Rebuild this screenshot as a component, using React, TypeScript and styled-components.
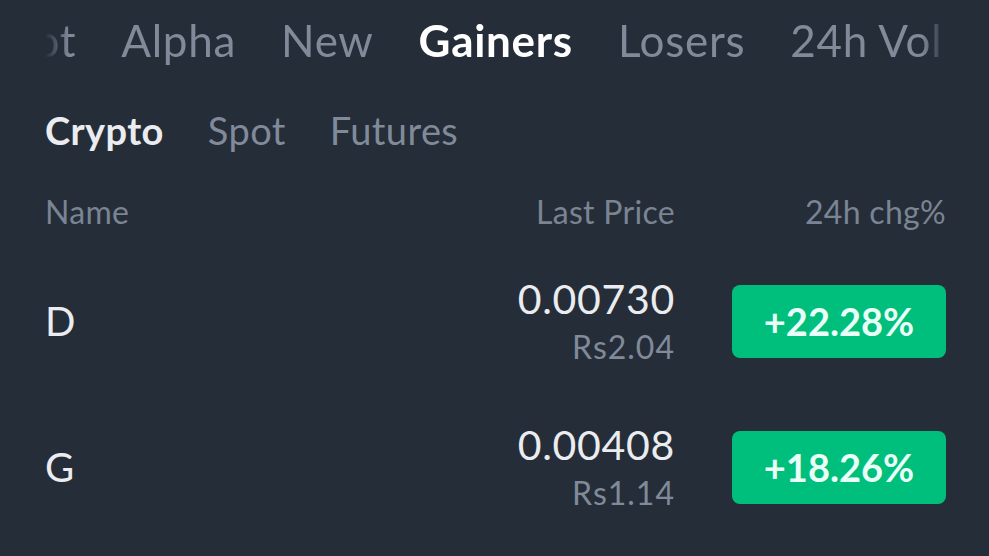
import React from 'react';
import styled, { createGlobalStyle } from 'styled-components';

const GlobalStyle = createGlobalStyle`
  html, body {
    margin: 0;
    padding: 0;
    background: #252d39;
  }
  body {
    font-family: Lato, 'Noto Sans', sans-serif;
    color: #eaecef;
  }
`;

const Screen = styled.main`
  box-sizing: border-box;
  width: 989px;
  height: 556px;
  overflow: hidden;
  background: #252d39;
`;

const TabViewport = styled.nav`
  position: relative;
  margin: 0 43px 0 45px;
  height: 80px;
  overflow: hidden;
  // soft fade where the strip is clipped
  mask-image: linear-gradient(
    to right,
    transparent 0,
    #000 24px,
    #000 calc(100% - 24px),
    transparent 100%
  );
`;

const TabStrip = styled.div<{ $offset: number }>`
  display: flex;
  align-items: center;
  gap: 45px;
  height: 100%;
  margin-left: ${(p) => -p.$offset}px;
  white-space: nowrap;
`;

const Tab = styled.span<{ $active?: boolean }>`
  font-size: 44px;
  letter-spacing: 0.7px;
  font-weight: ${(p) => (p.$active ? 700 : 400)};
  color: ${(p) => (p.$active ? '#ffffff' : '#808a99')};
`;

const SubTabs = styled.div`
  display: flex;
  gap: 44px;
  height: 100px;
  align-items: center;
  padding: 0 45px;
`;

const SubTab = styled.span<{ $active?: boolean }>`
  font-size: 38px;
  letter-spacing: 0.4px;
  font-weight: ${(p) => (p.$active ? 700 : 400)};
  color: ${(p) => (p.$active ? '#eaecef' : '#808a99')};
`;

const Grid = styled.div`
  display: grid;
  grid-template-columns: 1fr auto 214px;
  column-gap: 57px;
  align-items: center;
  padding: 0 43px 0 45px;
`;

const HeaderRow = styled(Grid)`
  height: 62px;
  padding-bottom: 6px;
  font-size: 32px;
  letter-spacing: 0.3px;
  color: #7a8493;
`;

const HeadCell = styled.span<{ $align?: string }>`
  text-align: ${(p) => p.$align || 'left'};
`;

const Row = styled(Grid)`
  height: 146px;
`;

const Symbol = styled.span`
  font-size: 40px;
  color: #eaecef;
`;

const PriceCell = styled.div`
  display: flex;
  flex-direction: column;
  align-items: flex-end;
`;

const Price = styled.span`
  font-size: 41px;
  letter-spacing: 0.7px;
  line-height: 46px;
  color: #eaecef;
`;

const Fiat = styled.span`
  margin-top: 5px;
  font-size: 32px;
  letter-spacing: 1px;
  line-height: 40px;
  color: #808a99;
`;

const ChangeBadge = styled.div`
  display: flex;
  align-items: center;
  justify-content: center;
  height: 73px;
  border-radius: 8px;
  background: #00bf7d;
  color: #e9fff7;
  font-size: 38px;
  font-weight: 700;
`;

const tabs = ['Hot', 'Alpha', 'New', 'Gainers', 'Losers', '24h Vol', 'Market Cap'];

const rows = [
  { symbol: 'D', price: '0.00730', fiat: 'Rs2.04', change: '+22.28%' },
  { symbol: 'G', price: '0.00408', fiat: 'Rs1.14', change: '+18.26%' },
];

const App = (): JSX.Element => {
  return (
    <Screen>
      <GlobalStyle />
      <TabViewport>
        <TabStrip $offset={44}>
          {tabs.map((t) => (
            <Tab key={t} $active={t === 'Gainers'}>
              {t}
            </Tab>
          ))}
        </TabStrip>
      </TabViewport>
      <SubTabs>
        <SubTab $active>Crypto</SubTab>
        <SubTab>Spot</SubTab>
        <SubTab>Futures</SubTab>
      </SubTabs>
      <HeaderRow>
        <HeadCell>Name</HeadCell>
        <HeadCell $align="right">Last Price</HeadCell>
        <HeadCell $align="right">24h chg%</HeadCell>
      </HeaderRow>
      {rows.map((r) => (
        <Row key={r.symbol}>
          <Symbol>{r.symbol}</Symbol>
          <PriceCell>
            <Price>{r.price}</Price>
            <Fiat>{r.fiat}</Fiat>
          </PriceCell>
          <ChangeBadge>{r.change}</ChangeBadge>
        </Row>
      ))}
    </Screen>
  );
};

export default App;
